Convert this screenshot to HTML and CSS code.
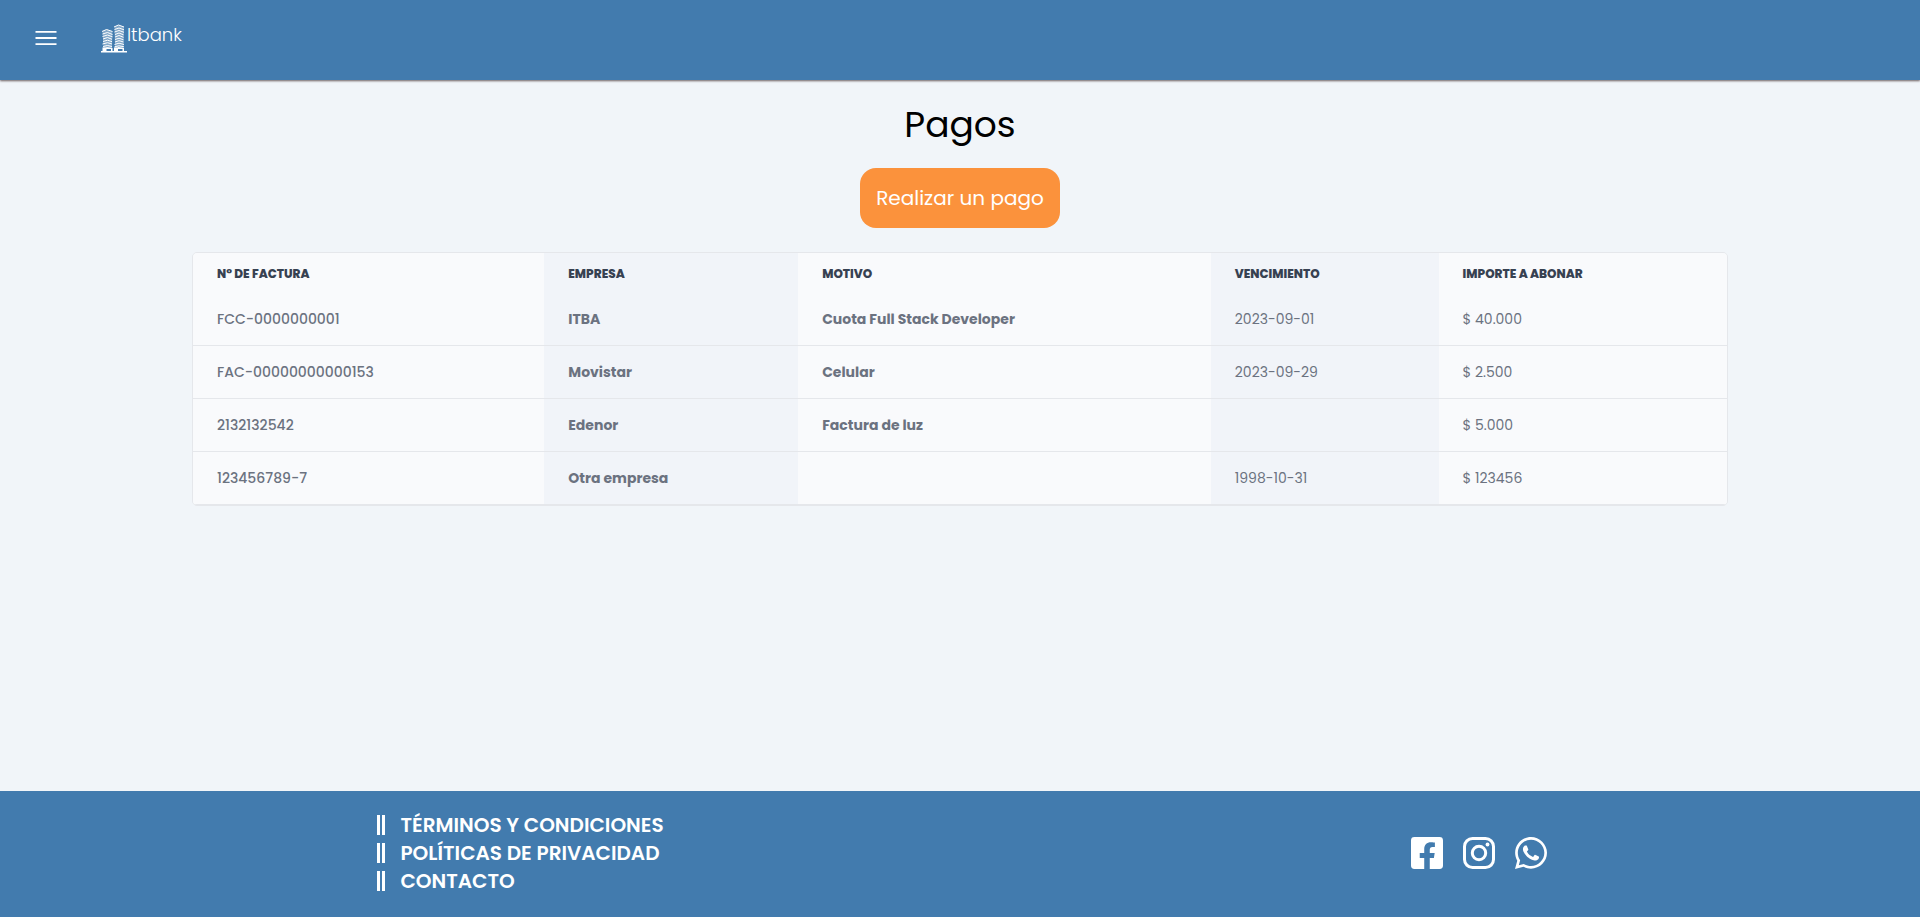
FILE: index.html
```html
<!DOCTYPE html>
<html lang="es">
<head>
<meta charset="utf-8">
<meta name="viewport" content="width=device-width, initial-scale=1">
<title>Itbank - Pagos</title>
<link rel="stylesheet" href="styles.css">
</head>
<body>
<header class="topbar">
  <button class="menu-button" type="button" aria-label="Abrir menú">
    <svg width="24" height="24" viewBox="0 0 24 24" aria-hidden="true"><path d="M1.500 5.800h21M1.500 12h21M1.500 18.200h21" fill="none" stroke="currentColor" stroke-width="1.800"/></svg>
  </button>
  <a class="brand" href="#">
    <svg width="26" height="30" viewBox="0 0 26 30" aria-hidden="true">
      <path d="M1.500 7L6 5.500l5.500 2L11 24H2.500zM13.500 2.500L17.500 1 23 2.800 22.500 24H14z" fill="currentColor" fill-opacity=".35"/>
      <path d="M1 7.500l4.500-2 6 2M1.500 10l5-1.500 5 2M1.500 12.500l5-1.500 5 1.800M2 15l4.500-1.500 4.500 1.800M2 17.500l4.500-1.300 4.500 1.500M1.500 20l5-1.300 4.500 1.300M2 22.500l4.500-1 4.500 1M13 3l4.500-2 5.500 2M13.500 5.500l4.500-1.500 5 1.800M13.500 8l4.500-1.500 5 1.800M14 10.500L18 9l4.500 1.800M14 13l4-1.500 4.500 1.800M14 15.500l4-1.300 4.500 1.600M14 18l4-1.300 4.500 1.300M13.500 20.500l4.500-1.300 5 1.300M13.500 22.800l4.500-1 5 1" fill="none" stroke="currentColor"/>
      <path d="M0 27h26v1.500H0zM1.500 23.500h4V27h-4zM5.500 23l6 1v3H10v-2H5.500zM13 23.500h4V27h-4zM17 23l6 1v3h-1.500v-2H17z" fill="currentColor"/>
    </svg>
    <span class="brand-name">Itbank</span>
  </a>
</header>

<main class="content">
  <h1 class="title">Pagos</h1>
  <button class="pay-button" type="button">Realizar un pago</button>
  <div class="table-card">
    <table class="payments">
      <colgroup>
        <col class="col-invoice"><col class="col-company"><col class="col-reason"><col class="col-due"><col class="col-amount">
      </colgroup>
      <thead>
        <tr><th scope="col">N° de factura</th><th scope="col">Empresa</th><th scope="col">Motivo</th><th scope="col">Vencimiento</th><th scope="col">Importe a abonar</th></tr>
      </thead>
      <tbody>
        <tr><th scope="row">FCC-0000000001</th><td class="strong">ITBA</td><td class="strong">Cuota Full Stack Developer</td><td>2023-09-01</td><td>$ 40.000</td></tr>
        <tr><th scope="row">FAC-00000000000153</th><td class="strong">Movistar</td><td class="strong">Celular</td><td>2023-09-29</td><td>$ 2.500</td></tr>
        <tr><th scope="row">2132132542</th><td class="strong">Edenor</td><td class="strong">Factura de luz</td><td></td><td>$ 5.000</td></tr>
        <tr><th scope="row">123456789-7</th><td class="strong">Otra empresa</td><td class="strong"></td><td>1998-10-31</td><td>$ 123456</td></tr>
      </tbody>
    </table>
  </div>
</main>

<footer class="footer">
  <ul class="footer-links">
    <li><a href="#">TÉRMINOS Y CONDICIONES</a></li>
    <li><a href="#">POLÍTICAS DE PRIVACIDAD</a></li>
    <li><a href="#">CONTACTO</a></li>
  </ul>
  <div class="social">
    <a href="#" aria-label="Facebook"><svg width="32" height="32" viewBox="0 32 448 448" aria-hidden="true"><path fill="currentColor" d="M400 32H48A48 48 0 0 0 0 80v352a48 48 0 0 0 48 48h137.250V327.690h-63V256h63v-54.640c0-62.150 37-96.480 93.670-96.480 27.140 0 55.520 4.840 55.520 4.840v61h-31.270c-30.810 0-40.420 19.120-40.420 38.730V256h68.780l-11 71.690h-57.780V480H400a48 48 0 0 0 48-48V80a48 48 0 0 0-48-48z"/></svg></a>
    <a href="#" aria-label="Instagram"><svg width="32" height="32" viewBox="0 0 32 32" aria-hidden="true"><rect x="1.500" y="1.500" width="29" height="29" rx="8" fill="none" stroke="currentColor" stroke-width="3"/><circle cx="16" cy="16" r="6.700" fill="none" stroke="currentColor" stroke-width="3"/><circle cx="24.500" cy="7.500" r="1.900" fill="currentColor"/></svg></a>
    <a href="#" aria-label="WhatsApp"><svg width="32" height="32" viewBox="0 32 448 448" aria-hidden="true"><path fill="currentColor" d="M380.900 97.100C339 55.100 283.200 32 223.900 32c-122.400 0-222 99.600-222 222 0 39.100 10.200 77.300 29.600 111L0 480l117.700-30.900c32.400 17.700 68.900 27 106.100 27h.1c122.300 0 224.100-99.600 224.100-222 0-59.300-25.200-115-67.100-157zm-157 341.600c-33.200 0-65.700-8.900-94-25.700l-6.700-4-69.800 18.300L72 359.200l-4.400-7c-18.500-29.400-28.200-63.300-28.200-98.200 0-101.700 82.800-184.500 184.600-184.500 49.300 0 95.600 19.200 130.400 54.100 34.800 34.900 56.200 81.200 56.100 130.500 0 101.800-84.900 184.600-186.600 184.600zm101.200-138.200c-5.500-2.800-32.800-16.200-37.900-18-5.100-1.900-8.800-2.800-12.500 2.800-3.700 5.600-14.300 18-17.600 21.800-3.200 3.700-6.500 4.200-12 1.400-32.600-16.300-54-29.100-75.500-66-5.700-9.800 5.700-9.100 16.300-30.300 1.800-3.700.9-6.900-.5-9.700-1.400-2.800-12.500-30.100-17.100-41.200-4.500-10.800-9.100-9.300-12.500-9.500-3.200-.2-6.900-.2-10.600-.2-3.700 0-9.700 1.400-14.800 6.900-5.100 5.600-19.400 19-19.400 46.300 0 27.300 19.900 53.700 22.600 57.400 2.800 3.700 39.100 59.700 94.800 83.800 35.200 15.200 49 16.500 66.600 13.900 10.700-1.600 32.800-13.400 37.400-26.400 4.600-13 4.600-24.100 3.200-26.400-1.300-2.500-5-3.900-10.500-6.600z"/></svg></a>
  </div>
</footer>
</body>
</html>
```
FILE: styles.css
```css
*,
*::before {
  box-sizing: border-box;
}

body {
  margin: 0;
  min-height: 100vh;
  display: flex;
  flex-direction: column;
  background: #f1f5f9;
  color: #000;
  font-family: Poppins, Inter, "Open Sans", sans-serif;
}

a {
  color: inherit;
  text-decoration: none;
}

svg {
  display: block;
}

.topbar {
  display: flex;
  align-items: center;
  gap: 43px;
  min-height: 80px;
  padding: 0 34px 4px;
  background: #427bae;
  color: #fff;
  box-shadow: 0 1px 2px rgba(50, 30, 30, 0.7);
}

.menu-button {
  padding: 0;
  border: 0;
  background: none;
  color: inherit;
  cursor: pointer;
}

.brand {
  display: flex;
  align-items: center;
  padding-top: 2px;
}

.brand-name {
  padding-bottom: 8px;
  font-size: 18px;
  font-weight: 300;
  line-height: 20px;
}

.content {
  flex: 1;
  display: flex;
  flex-direction: column;
  align-items: center;
}

.title {
  margin: 25px 0 23px;
  font-size: 36px;
  font-weight: 400;
  line-height: 40px;
}

.pay-button {
  padding: 16px;
  border: 0;
  border-radius: 16px;
  background: #fb923c;
  color: #fff;
  font-family: inherit;
  font-size: 20px;
  line-height: 28px;
  cursor: pointer;
}

.table-card {
  width: 80%;
  margin-top: 24px;
  overflow: hidden;
  border: 1px solid #e5e7eb;
  border-radius: 5px;
}

.payments {
  width: 100%;
  table-layout: fixed;
  border-spacing: 0;
  text-align: left;
  font-size: 14px;
  line-height: 20px;
  color: #6b7280;
}

.col-invoice { width: 22.9%; }
.col-company { width: 16.55%; }
.col-reason { width: 26.9%; }
.col-due { width: 14.85%; }

.payments th,
.payments td {
  height: 53px;
  padding: 16px 24px;
  border-bottom: 1px solid #e5e7eb;
  background: #f9fafc;
}

.payments tr > :nth-child(even) {
  background: #f1f4f9;
}

.payments tbody th {
  font-weight: 500;
}

.payments .strong {
  font-weight: 700;
}

.payments thead th {
  height: 40px;
  padding: 13px 24px 11px;
  border-bottom: 0;
  font-size: 12px;
  font-weight: 800;
  line-height: 16px;
  color: #374151;
  text-transform: uppercase;
}

.footer {
  display: flex;
  justify-content: space-around;
  align-items: center;
  padding: 20px 0 22px;
  background: #427bae;
  color: #fff;
}

.footer-links {
  margin: 0;
  padding: 0 0 0 4px;
  list-style: none;
  font-size: 20px;
  font-weight: 600;
  line-height: 28px;
}

.footer-links li {
  display: flex;
  align-items: center;
  gap: 15px;
}

.footer-links li::before {
  content: "";
  width: 8px;
  height: 20px;
  border: solid #fff;
  border-width: 0 3px;
}

.social {
  display: flex;
  gap: 20px;
}
```
